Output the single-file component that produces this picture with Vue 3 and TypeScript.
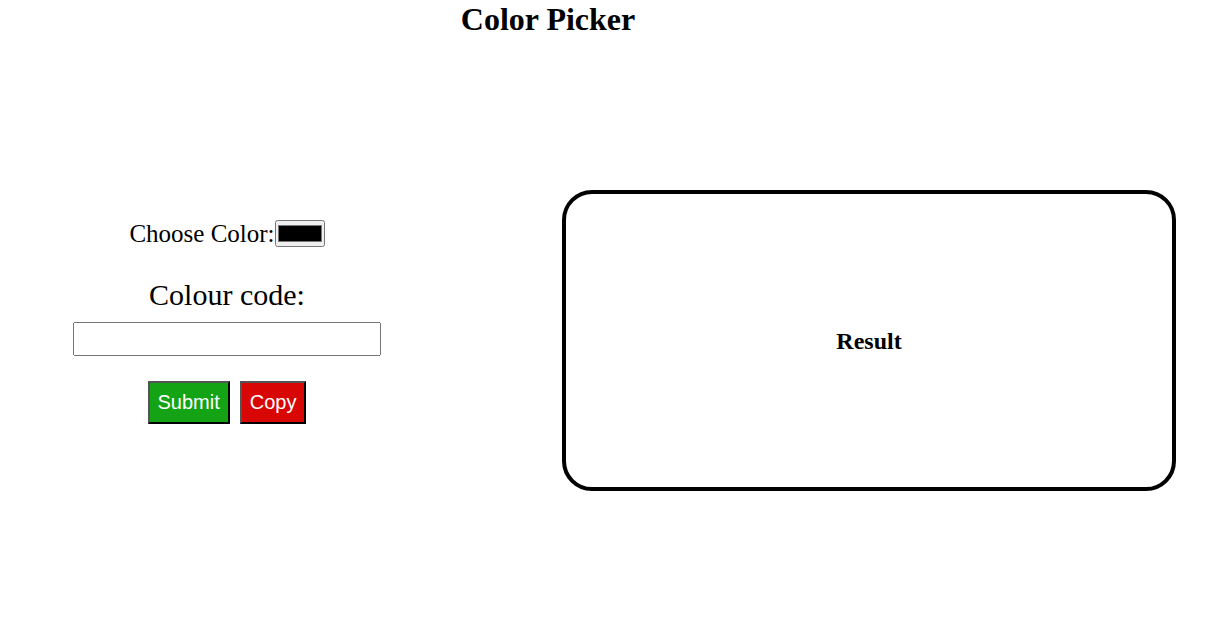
<script setup lang="ts">
import { ref } from 'vue'

const color = ref<string>('#000000')
const code = ref<string>('')
const background = ref<string>('transparent')

function submit(): void {
  code.value = color.value
  background.value = color.value
}

function copy(): void {
  navigator.clipboard?.writeText(code.value)
}
</script>

<template>
  <div class="page">
    <h1 class="title">Color Picker</h1>
    <main class="content">
      <form class="controls" @submit.prevent="submit">
        <div class="choose">
          <label for="color">Choose Color:</label>
          <input id="color" v-model="color" class="swatch" type="color" />
        </div>
        <label class="code-label" for="code">Colour code:</label>
        <input id="code" v-model="code" class="code" type="text" />
        <div class="actions">
          <button class="button submit" type="submit">Submit</button>
          <button class="button copy" type="button" @click="copy">Copy</button>
        </div>
      </form>
      <section class="result" :style="{ backgroundColor: background }">
        <h2 class="result-title">Result</h2>
      </section>
    </main>
  </div>
</template>

<style>
body {
  margin: 0;
  background: #fff;
}
</style>

<style scoped>
.page {
  font-family: "Liberation Serif", "Times New Roman", serif;
  color: #000;
}

.title {
  margin: 0;
  padding-right: 135px;
  font-size: 32px;
  line-height: 38px;
  text-align: center;
}

.content {
  display: flex;
  align-items: flex-start;
  gap: 108px;
  padding: 152px 55px 0 0;
}

.controls {
  display: flex;
  flex: 0 0 454px;
  flex-direction: column;
  align-items: center;
  padding-top: 30px;
}

.choose {
  display: flex;
  align-items: flex-start;
  font-size: 25px;
  line-height: 28px;
}

.swatch {
  box-sizing: border-box;
  width: 50px;
  height: 27px;
  padding: 0;
}

.code-label {
  margin-top: 30px;
  font-size: 30px;
  line-height: 34px;
}

.code {
  box-sizing: border-box;
  width: 308px;
  height: 34px;
  margin-top: 10px;
  font-size: 20px;
}

.actions {
  display: flex;
  gap: 10px;
  margin-top: 25px;
}

.button {
  height: 43px;
  padding: 8px;
  border: 2px outset #000;
  font-family: "Liberation Sans", Arial, sans-serif;
  font-size: 20px;
  color: #fff;
}

.submit {
  background: #14a314;
}

.copy {
  background: #d90606;
}

.result {
  display: flex;
  flex: 1;
  align-items: center;
  justify-content: center;
  box-sizing: border-box;
  min-height: 301px;
  border: 4px solid #000;
  border-radius: 30px;
}

.result-title {
  margin: 0;
  font-size: 24px;
  line-height: 28px;
}
</style>
